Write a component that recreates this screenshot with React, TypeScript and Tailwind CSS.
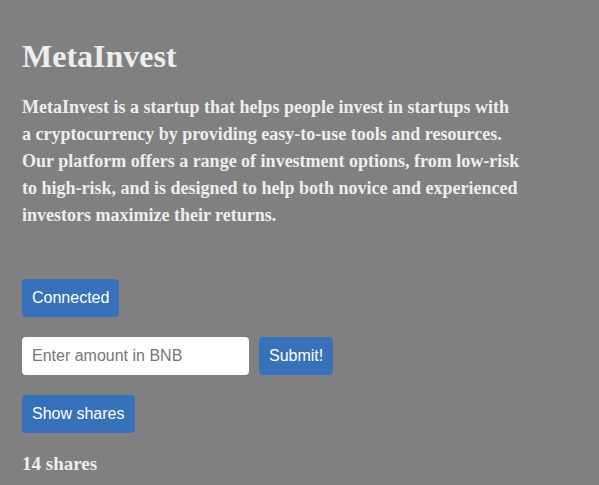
export default function App() {
  return (
    <div className="min-h-[485px] bg-[#808080] px-[22px] pt-[38px] text-[#eeeeee] font-['Liberation_Serif',serif]">
      <h1 className="text-[32px] font-bold leading-[36px]">MetaInvest</h1>
      <p className="mt-[20px] max-w-[500px] text-[18px] font-bold leading-[27px]">
        MetaInvest is a startup that helps people invest in startups with a cryptocurrency by
        providing easy-to-use tools and resources. Our platform offers a range of investment
        options, from low-risk to high-risk, and is designed to help both novice and experienced
        investors maximize their returns.
      </p>

      <div className="mt-[50px] flex flex-col items-start gap-[20px] font-['Liberation_Sans',sans-serif] text-[16px]">
        <button className="h-[38px] rounded-[4px] bg-[#3771b9] px-[10px] text-white">
          Connected
        </button>
        <div className="flex items-center gap-[10px]">
          <input
            type="text"
            placeholder="Enter amount in BNB"
            className="h-[38px] w-[227px] rounded-[4px] bg-white px-[10px] text-[#333] placeholder-[#777] outline-none"
          />
          <button className="h-[38px] rounded-[4px] bg-[#3771b9] px-[10px] text-white">
            Submit!
          </button>
        </div>
        <button className="h-[38px] rounded-[4px] bg-[#3771b9] px-[10px] text-white">
          Show shares
        </button>
      </div>

      <p className="mt-[18px] text-[19px] font-bold leading-[26px]">14 shares</p>
    </div>
  );
}
